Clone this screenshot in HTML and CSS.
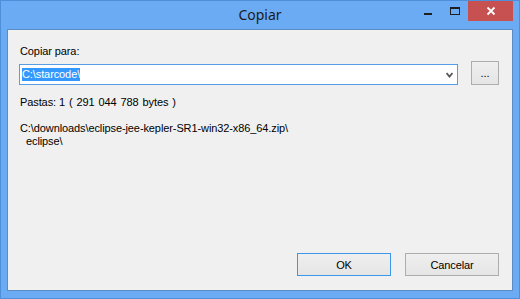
FILE: index.html
```html
<!DOCTYPE html>
<html>
<head>
<meta charset="utf-8">
<link rel="stylesheet" href="styles.css">
</head>
<body>
<div class="window">
  <div class="titlebar">
    <div></div>
    <div class="title">Copiar</div>
    <div class="controls">
      <div class="ctl">
        <svg width="26" height="20" viewBox="0 0 26 20"><rect x="8" y="12" width="8" height="2" fill="#1f1f1f"/></svg>
      </div>
      <div class="ctl">
        <svg width="26" height="20" viewBox="0 0 26 20"><rect x="8.5" y="6.5" width="9" height="7" fill="none" stroke="#1f1f1f" stroke-width="1"/><rect x="8" y="6" width="10" height="2" fill="#1f1f1f"/></svg>
      </div>
      <div class="ctl close">
        <svg width="45" height="20" viewBox="0 0 45 20"><path d="M19.5 6.5 L26.5 13.5 M26.5 6.5 L19.5 13.5" stroke="#fff" stroke-width="1.8" fill="none"/></svg>
      </div>
    </div>
  </div>
  <div class="client">
    <div class="label">Copiar para:</div>
    <div class="row">
      <div class="combo">
        <span class="sel">C:\starcode\</span>
        <svg class="chev" width="7" height="6" viewBox="0 0 7 6"><path d="M0.5 1 L3.5 4.5 L6.5 1" stroke="#555" stroke-width="1.8" fill="none"/></svg>
      </div>
      <button class="browse">...</button>
    </div>
    <div class="info"><span>Pastas: 1</span><span class="bytes">( 291 044 788 bytes )</span></div>
    <div class="path">C:\downloads\eclipse-jee-kepler-SR1-win32-x86_64.zip\</div>
    <div class="path sub">eclipse\</div>
    <div class="buttons">
      <button class="btn default">OK</button>
      <button class="btn">Cancelar</button>
    </div>
  </div>
</div>
</body>
</html>
```

FILE: styles.css
```css
html, body {
  margin: 0;
  padding: 0;
  background: #6aabf4;
}
body {
  font-family: "Liberation Sans", Arial, sans-serif;
  font-size: 11px;
  color: #000;
}
.window {
  width: 520px;
  height: 299px;
  box-sizing: border-box;
  border: 1px solid #4e8fd9;
  background: #6aabf4;
  display: flex;
  flex-direction: column;
  padding: 0 6px 7px 6px;
}
.titlebar {
  height: 28px;
  flex: none;
  display: grid;
  grid-template-columns: 1fr auto 1fr;
}
.title {
  font-family: "Noto Sans", "Open Sans", sans-serif;
  font-size: 14px;
  line-height: 20px;
  padding-top: 4px;
  color: #1b1b1b;
}
.controls {
  display: flex;
  justify-content: flex-end;
  align-items: flex-start;
}
.ctl {
  width: 26px;
  height: 20px;
  display: flex;
}
.ctl svg {
  display: block;
}
.close {
  width: 45px;
  background: #c75050;
}
.client {
  flex: 1;
  border: 1px solid #5b8cc4;
  background: #f0f0f0;
  display: flex;
  flex-direction: column;
  padding: 15px 13px 14px 11px;
  letter-spacing: -0.1px;
}
.label {
  margin-left: 1px;
  line-height: 13px;
}
.row {
  display: flex;
  align-items: flex-end;
  gap: 13px;
  margin-top: 3px;
}
.combo {
  width: 439px;
  height: 21px;
  box-sizing: border-box;
  border: 1px solid #569de5;
  background: #fff;
  display: flex;
  align-items: center;
  padding: 0 4px 0 2px;
}
.sel {
  background: #3399ff;
  color: #fff;
  line-height: 13px;
}
.chev {
  margin-left: auto;
  display: block;
}
.browse, .btn {
  font: inherit;
  letter-spacing: inherit;
  color: #000;
  box-sizing: border-box;
  border: 1px solid #adadad;
  background: linear-gradient(#efefef, #e5e5e5);
  padding: 0;
  margin: 0;
}
.browse {
  width: 28px;
  height: 24px;
  line-height: 13px;
}
.info {
  margin-top: 11px;
  margin-left: 1px;
  line-height: 13px;
}
.bytes {
  margin-left: 4px;
  word-spacing: 1px;
}
.path {
  margin-top: 13px;
  margin-left: 1px;
  line-height: 13px;
}
.path.sub {
  margin-top: 0;
  margin-left: 7px;
}
.buttons {
  margin-top: auto;
  display: flex;
  justify-content: flex-end;
  gap: 14px;
}
.btn {
  width: 94px;
  height: 23px;
}
.btn.default {
  border-color: #3c97ea;
}
```
